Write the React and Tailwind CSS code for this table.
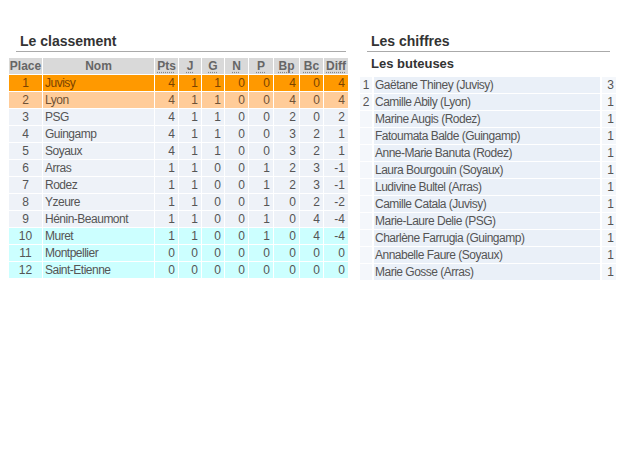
const classement = [
  [1, "Juvisy", 4, 1, 1, 0, 0, 4, 0, 4],
  [2, "Lyon", 4, 1, 1, 0, 0, 4, 0, 4],
  [3, "PSG", 4, 1, 1, 0, 0, 2, 0, 2],
  [4, "Guingamp", 4, 1, 1, 0, 0, 3, 2, 1],
  [5, "Soyaux", 4, 1, 1, 0, 0, 3, 2, 1],
  [6, "Arras", 1, 1, 0, 0, 1, 2, 3, -1],
  [7, "Rodez", 1, 1, 0, 0, 1, 2, 3, -1],
  [8, "Yzeure", 1, 1, 0, 0, 1, 0, 2, -2],
  [9, "Hénin-Beaumont", 1, 1, 0, 0, 1, 0, 4, -4],
  [10, "Muret", 1, 1, 0, 0, 1, 0, 4, -4],
  [11, "Montpellier", 0, 0, 0, 0, 0, 0, 0, 0],
  [12, "Saint-Etienne", 0, 0, 0, 0, 0, 0, 0, 0],
];

const buteuses = [
  ["1", "Gaëtane Thiney (Juvisy)", 3],
  ["2", "Camille Abily (Lyon)", 1],
  ["", "Marine Augis (Rodez)", 1],
  ["", "Fatoumata Balde (Guingamp)", 1],
  ["", "Anne-Marie Banuta (Rodez)", 1],
  ["", "Laura Bourgouin (Soyaux)", 1],
  ["", "Ludivine Bultel (Arras)", 1],
  ["", "Camille Catala (Juvisy)", 1],
  ["", "Marie-Laure Delie (PSG)", 1],
  ["", "Charlène Farrugia (Guingamp)", 1],
  ["", "Annabelle Faure (Soyaux)", 1],
  ["", "Marie Gosse (Arras)", 1],
];

const colonnes = [
  { label: "Pts", w: "w-[23px]" },
  { label: "J", w: "w-[22px]" },
  { label: "G", w: "w-[22px]" },
  { label: "N", w: "w-[23px]" },
  { label: "P", w: "w-[24px]" },
  { label: "Bp", w: "w-[25px]" },
  { label: "Bc", w: "w-[23px]" },
  { label: "Diff", w: "w-[24px]" },
];

const fondLigne = (place) => {
  if (place === 1) return "bg-[#ff9900] text-[#7a4300]";
  if (place === 2) return "bg-[#ffcc99] text-[#6e5236]";
  if (place >= 10) return "bg-[#ccffff] text-[#555]";
  return "bg-[#eef2f8] text-[#555]";
};

export default function App() {
  return (
    <div
      className="w-[629px] h-[472px] bg-white flex gap-[11px] pt-[32px] pl-[8px] text-[12px]"
      style={{ fontFamily: '"Liberation Sans", Arial, sans-serif' }}
    >
      {/* Classement */}
      <div className="w-[341px]">
        <h2 className="ml-[8px] w-[330px] pl-[4px] border-b border-[#aaa] text-[14px] font-bold text-[#333] leading-[18px] pb-[1px]">
          Le classement
        </h2>
        <table className="table-fixed border-separate border-spacing-[1px] mt-[5px] leading-[16px]">
          <thead>
            <tr className="bg-[#d9d9d9] text-[#666] font-bold">
              <th className="w-[33px] h-[16px] font-bold">Place</th>
              <th className="w-[111px] font-bold">Nom</th>
              {colonnes.map((c) => (
                <th key={c.label} className={`${c.w} font-bold`}>
                  <span className="underline decoration-dotted decoration-[#888] underline-offset-2">{c.label}</span>
                </th>
              ))}
            </tr>
          </thead>
          <tbody>
            {classement.map((ligne) => (
              <tr key={ligne[0]} className={fondLigne(ligne[0])}>
                <td className="h-[16px] text-center">{ligne[0]}</td>
                <td className="pl-[2px] tracking-[-0.5px]">{ligne[1]}</td>
                {ligne.slice(2).map((v, i) => (
                  <td key={i} className="text-right pr-[3px]">{v}</td>
                ))}
              </tr>
            ))}
          </tbody>
        </table>
      </div>

      {/* Chiffres */}
      <div className="w-[258px]">
        <h2 className="ml-[7px] w-[243px] pl-[4px] border-b border-[#aaa] text-[14px] font-bold text-[#333] leading-[18px] pb-[1px]">
          Les chiffres
        </h2>
        <h3 className="ml-[11px] mt-[4px] text-[13px] font-bold text-[#333] leading-[16px]">Les buteuses</h3>
        <table className="table-fixed border-separate border-spacing-x-[2px] border-spacing-y-[1px] -ml-[2px] mt-[4px] leading-[16px] text-[#555]">
          <tbody>
            {buteuses.map((b, i) => (
              <tr key={i}>
                <td className="w-[12px] h-[16px] text-center bg-[#f4f7fb]">{b[0]}</td>
                <td className="w-[227px] pl-[1px] bg-[#eaf0f8] tracking-[-0.5px]">{b[1]}</td>
                <td className="w-[14px] text-right pr-[2px] bg-[#f4f7fb]">{b[2]}</td>
              </tr>
            ))}
          </tbody>
        </table>
      </div>
    </div>
  );
}
